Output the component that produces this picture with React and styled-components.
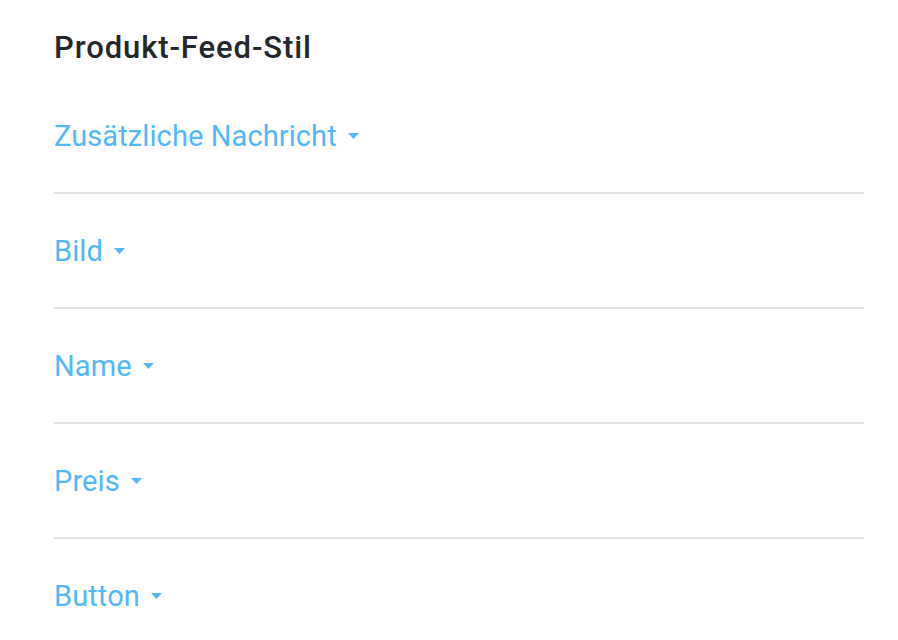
import React from "react";
import styled, { createGlobalStyle } from "styled-components";

const GlobalStyle = createGlobalStyle`
  body {
    margin: 0;
    background: #ffffff;
    font-family: Roboto, "Noto Sans", sans-serif;
  }
`;

const Panel = styled.section`
  width: 810px;
  padding: 26px 0 0 54px;
`;

const Heading = styled.h2`
  margin: 0 0 9px;
  font-size: 31px;
  line-height: 44px;
  font-weight: 500;
  letter-spacing: 0.9px;
  color: #24272b;
`;

const List = styled.div`
  display: flex;
  flex-direction: column;
`;

const Row = styled.div`
  height: 113px;
  display: flex;
  align-items: center;
  border-bottom: 2px solid #e1e1e1;

  &:last-child {
    border-bottom: none;
  }
`;

const Toggle = styled.button`
  display: flex;
  align-items: center;
  gap: 11px;
  padding: 0;
  border: none;
  background: none;
  font-family: inherit;
  font-size: 29px;
  font-weight: 400;
  letter-spacing: 0.1px;
  color: #54b8f6;
  cursor: pointer;
`;

const Caret = () => (
  <svg width="11" height="6" viewBox="0 0 11 6">
    <path d="M0 0h11L5.5 6z" fill="#54b8f6" />
  </svg>
);

const sections = ["Zusätzliche Nachricht", "Bild", "Name", "Preis", "Button"];

const App = () => {
  return (
    <>
      <GlobalStyle />
      <Panel>
        <Heading>Produkt-Feed-Stil</Heading>
        <List>
          {sections.map((label) => (
            <Row key={label}>
              <Toggle>
                {label}
                <Caret />
              </Toggle>
            </Row>
          ))}
        </List>
      </Panel>
    </>
  );
};

export default App;
